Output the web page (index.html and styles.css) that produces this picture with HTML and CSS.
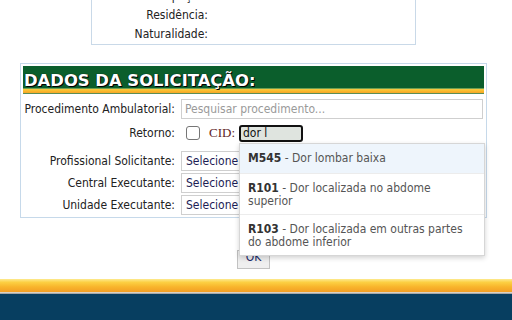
FILE: index.html
```html
<!DOCTYPE html>
<html lang="pt-BR">
<head>
<meta charset="utf-8">
<title>Solicitação</title>
<link rel="stylesheet" href="styles.css">
</head>
<body>
<div class="patient">
  <div class="prow"><span class="plabel">Ocupação:</span><span class="pval"></span></div>
  <div class="prow"><span class="plabel">Residência:</span><span class="pval"></span></div>
  <div class="prow"><span class="plabel">Naturalidade:</span><span class="pval"></span></div>
</div>

<div class="panel">
  <div class="panel-head"><h2 class="title">DADOS DA SOLICITAÇÃO:</h2></div>
  <div class="form">
    <div class="row row-first">
      <label class="lbl">Procedimento Ambulatorial:</label>
      <input class="field" type="text" placeholder="Pesquisar procedimento...">
    </div>
    <div class="row row-cid">
      <label class="lbl">Retorno:</label>
      <span class="check"></span>
      <span class="cid-label">CID:</span>
      <span class="cid-wrap">
        <span class="cid-input">dor l</span>
        <ul class="dropdown">
          <li class="opt active"><b class="code">M545</b> - Dor lombar baixa</li>
          <li class="opt"><b class="code">R101</b> - Dor localizada no abdome superior</li>
          <li class="opt"><b class="code">R103</b> - Dor localizada em outras partes do abdome inferior</li>
        </ul>
      </span>
    </div>
    <div class="row row-sel row-sel-first">
      <label class="lbl">Profissional Solicitante:</label>
      <span class="select">Selecione...</span>
    </div>
    <div class="row row-sel">
      <label class="lbl">Central Executante:</label>
      <span class="select">Selecione...</span>
    </div>
    <div class="row row-sel">
      <label class="lbl">Unidade Executante:</label>
      <span class="select">Selecione...</span>
    </div>
  </div>
</div>

<div class="actions"><button class="ok" type="button">OK</button></div>

<div class="footer">
  <div class="band"></div>
  <div class="bar"></div>
</div>
</body>
</html>
```
FILE: styles.css
```css
html, body {
  margin: 0;
  padding: 0;
  background: #ffffff;
  overflow: hidden;
}
body {
  font-family: "DejaVu Sans Condensed", "DejaVu Sans", sans-serif;
  font-size: 12px;
  color: #222;
  width: 512px;
  height: 320px;
}

/* patient box (scrolled, top cut) */
.patient {
  box-sizing: border-box;
  width: 325px;
  margin: -13px 0 0 91px;
  border: 1px solid #c9d9e8;
  border-top: none;
}
.prow {
  display: flex;
  line-height: 19px;
  height: 19px;
}
.plabel {
  width: 116px;
  text-align: right;
}

/* panel */
.panel {
  box-sizing: border-box;
  width: 467px;
  margin: 18px 0 0 20px;
  border: 1px solid #c6d9ea;
  padding: 2px 2px 2px 2px;
}
.panel-head {
  height: 28px;
  background: linear-gradient(to bottom,
    #0b5e2c 0px, #0b5e2c 22px,
    #6e9f52 22px, #6e9f52 23px,
    #f5cb45 23px, #fbba2a 25px,
    #f4a52a 27px, #5b8e55 27px, #5b8e55 28px);
}
.title {
  margin: 0;
  padding: 4px 0 0 1px;
  font-family: "DejaVu Sans", sans-serif;
  font-weight: bold;
  font-size: 16.4px;
  line-height: 21px;
  color: #ffffff;
  text-shadow: 1px 1px 0 #000, 0 0 1px #000;
}

.form {
  margin-top: 5px;
}
.row {
  display: flex;
  align-items: center;
  height: 20px;
}
.lbl {
  width: 152px;
  text-align: right;
  margin-right: 6px;
  flex: none;
}
.field {
  box-sizing: border-box;
  width: 302px;
  height: 20px;
  margin: 0;
  border: 1px solid #cfcfcf;
  padding: 0 3px;
  font-family: inherit;
  font-size: 12px;
  color: #222;
  outline: none;
}
.field::placeholder {
  color: #9a9a9a;
}

.row-cid {
  height: 24px;
  margin-top: 2px;
  position: relative;
  z-index: 5;
}
.check {
  box-sizing: border-box;
  width: 14px;
  height: 14px;
  margin-left: 5px;
  border: 1px solid #767676;
  border-radius: 3px;
  background: #fff;
  flex: none;
}
.cid-label {
  margin-left: 9px;
  margin-right: 4px;
  font-family: "Liberation Serif", serif;
  font-size: 13px;
  color: #5e2424;
}
.cid-wrap {
  position: relative;
  display: block;
}
.cid-input {
  display: block;
  box-sizing: border-box;
  width: 64px;
  height: 17px;
  border: 2px solid #111;
  border-radius: 3px;
  background: #dfe4df;
  padding-left: 2px;
  line-height: 13px;
  color: #111;
}
.dropdown {
  position: absolute;
  left: 0;
  top: 18px;
  z-index: 10;
  box-sizing: border-box;
  width: 246px;
  margin: 0;
  padding: 0;
  list-style: none;
  background: #fff;
  border: 1px solid #d6d6d6;
  box-shadow: 0 2px 5px rgba(0, 0, 0, 0.18);
}
.opt {
  padding: 8px 8px 6px;
  line-height: 13px;
  color: #555;
  border-top: 1px solid #ececec;
}
.opt:first-child {
  border-top: none;
  padding: 8px 8px;
}
.opt.active {
  background: #eef5fc;
}
.code {
  color: #333;
  font-weight: bold;
}

.row-sel {
  margin-top: 2px;
}
.row-sel-first {
  margin-top: 6px;
}
.select {
  box-sizing: border-box;
  display: block;
  width: 302px;
  height: 20px;
  border: 1px solid #cfcfcf;
  padding-left: 4px;
  line-height: 18px;
  color: #1d1d55;
  background: #fff;
}

/* actions */
.actions {
  width: 467px;
  margin: 32px 0 0 20px;
  display: flex;
  justify-content: center;
  position: relative;
  z-index: 1;
}
.ok {
  box-sizing: border-box;
  height: 19px;
  margin: 0;
  padding: 0 8px 5px;
  border: 1px solid #c2c2c2;
  background: #efefef;
  font-family: inherit;
  font-size: 12px;
  color: #1a2a6a;
  line-height: 12px;
}

/* footer */
.footer {
  margin-top: 10px;
}
.band {
  height: 13px;
  background: linear-gradient(to bottom, #fdea90 0%, #fcd043 25%, #f8b52c 60%, #f29e24 100%);
  border-bottom: 1px solid #d9d2c4;
  box-shadow: 0 1px 0 #a7a7a7;
}
.bar {
  margin-top: 1px;
  height: 40px;
  background: #073e60;
}
```
